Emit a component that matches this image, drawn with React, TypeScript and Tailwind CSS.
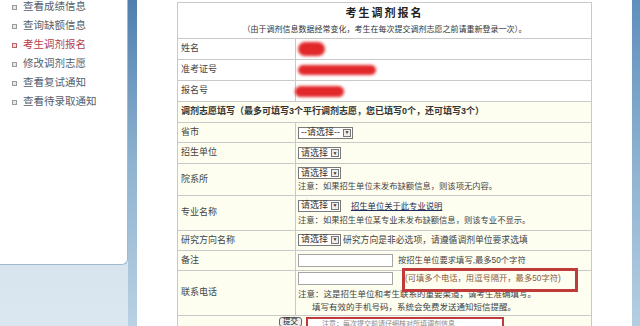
const menu = [
  { label: "查看成绩信息" },
  { label: "查询缺额信息" },
  { label: "考生调剂报名", active: true },
  { label: "修改调剂志愿" },
  { label: "查看复试通知" },
  { label: "查看待录取通知" },
];

function Select({ text }: { text: string }) {
  return (
    <span className="inline-flex h-[12px] shrink-0 items-center gap-[2px] self-start whitespace-nowrap border border-[#7a7a7a] bg-white pl-[2px] text-[9px] leading-none text-[#333]">
      <span>{text}</span>
      <span className="m-px flex h-[8px] w-[8px] items-center justify-center border border-[#777] bg-[#eee] text-[5px] text-[#333]">
        ▼
      </span>
    </span>
  );
}

function Scribble({ className }: { className: string }) {
  return <span className={`block rounded-full bg-[#e2272a] blur-[1.5px] ${className}`} />;
}

function Row({
  label,
  h,
  children,
  cream,
}: {
  label: string;
  h: string;
  children?: React.ReactNode;
  cream?: boolean;
}) {
  return (
    <div className={`flex border-b border-[#c9c9c9] ${h} ${cream ? "bg-[#fdfdf0]" : "bg-white"}`}>
      <div className="flex w-[118px] shrink-0 items-center border-r border-[#c9c9c9] pl-[3px] text-[9px] text-[#444]">
        {label}
      </div>
      <div className="relative flex min-w-0 flex-1 flex-col justify-center pl-[2px]">{children}</div>
    </div>
  );
}

export default function App() {
  return (
    <div className="flex h-[326px] w-[640px] overflow-hidden bg-white font-['Liberation_Sans','Noto_Sans_CJK_SC',sans-serif]">
      {/* sidebar */}
      <div className="flex w-[128px] shrink-0 flex-col bg-gradient-to-b from-[#c4d8e8] to-[#dbe7f0]">
        <div className="h-[265px] rounded-br-[6px] border-r border-b border-[#9fb9cf] bg-white">
          <ul className="flex flex-col gap-[4.5px]">
            {menu.map((m) => (
              <li key={m.label} className="flex h-[14.5px] items-center gap-[6px] pl-[12px]">
                <span
                  className={`h-[5px] w-[5px] border ${m.active ? "border-[#b9636b] bg-[#f3dcdc]" : "border-[#9a9a9a] bg-[#e8e8e8]"}`}
                />
                <span className={`text-[10.5px] ${m.active ? "text-[#b73a47]" : "text-[#55606c]"}`}>{m.label}</span>
              </li>
            ))}
          </ul>
        </div>
      </div>
      <div className="w-[9px] shrink-0 bg-gradient-to-b from-[#4f7fae] via-[#8fb3d0] to-[#b9d1e3]" />

      <div className="w-[40px] shrink-0" />

      {/* form table */}
      <div className="relative mt-[2px] w-[415px] shrink-0 self-start border-t border-l border-r border-[#c9c9c9] text-[#333]">
        <div className="flex h-[36px] flex-col items-center justify-center border-b border-[#c9c9c9] bg-white">
          <div className="text-[11px] font-bold tracking-[2px] text-[#222]">考生调剂报名</div>
          <div className="mt-[3px] text-[8px] text-[#333]">
            （由于调剂信息数据经常变化，考生在每次提交调剂志愿之前请重新登录一次）。
          </div>
        </div>
        <Row label="姓名" h="h-[21px]">
          <Scribble className="h-[14px] w-[27px]" />
        </Row>
        <Row label="准考证号" h="h-[21px]">
          <Scribble className="h-[10px] w-[78px]" />
        </Row>
        <Row label="报名号" h="h-[21px]">
          <Scribble className="-ml-[3px] h-[11px] w-[49px]" />
        </Row>
        <div className="flex h-[21px] items-center border-b border-[#c9c9c9] bg-[#fdfdf0] pl-[3px] text-[9px] font-bold text-[#333]">
          调剂志愿填写（最多可填写3个平行调剂志愿，您已填写0个，还可填写3个）
        </div>
        <Row label="省市" h="h-[20px]" cream>
          <Select text="--请选择--" />
        </Row>
        <Row label="招生单位" h="h-[21px]" cream>
          <Select text="请选择" />
        </Row>
        <Row label="院系所" h="h-[32px]" cream>
          <Select text="请选择" />
          <div className="mt-[2px] text-[8.3px] leading-[11px] text-[#444]">注意：如果招生单位未发布缺额信息，则该项无内容。</div>
        </Row>
        <Row label="专业名称" h="h-[35px]" cream>
          <div className="flex items-center gap-[10px]">
            <Select text="请选择" />
            <span className="text-[8.3px] text-[#1d2f5c] underline">招生单位关于此专业说明</span>
          </div>
          <div className="mt-[3px] text-[8.3px] leading-[11px] text-[#444]">
            注意：如果招生单位某专业未发布缺额信息，则该专业不显示。
          </div>
        </Row>
        <Row label="研究方向名称" h="h-[20px]" cream>
          <div className="flex items-center gap-[2px]">
            <Select text="请选择" />
            <span className="text-[8.8px] text-[#444]">研究方向是非必选项，请遵循调剂单位要求选填</span>
          </div>
        </Row>
        <Row label="备注" h="h-[20px]" cream>
          <div className="flex items-center gap-[5px]">
            <span className="h-[13px] w-[95px] border border-[#a5a5a5] bg-white" />
            <span className="text-[8.3px] text-[#444]">按招生单位要求填写,最多50个字符</span>
          </div>
        </Row>
        <Row label="联系电话" h="h-[45px]" cream>
          <div className="flex items-center gap-[12px]">
            <span className="h-[13px] w-[95px] border border-[#a5a5a5] bg-white" />
            <span className="text-[8.3px] text-[#8a5b3c]">(可填多个电话，用逗号隔开，最多50字符)</span>
          </div>
          <div className="mt-[3px] text-[8.5px] leading-[13px] text-[#444]">
            注意：这是招生单位和考生联系的重要渠道，请考生准确填写。
            <div className="pl-[14px]">填写有效的手机号码，系统会免费发送通知短信提醒。</div>
          </div>
          <span className="absolute left-[106px] top-[-3px] h-[24px] w-[176px] border-[3px] border-[#c0393b]" />
        </Row>
        <div className="flex h-[12px] items-start bg-[#fdfdf0] pl-[101px] pt-[1px]">
          <span className="rounded-[3px] border border-[#666] bg-[#eee] px-[3px] text-[7.5px] leading-[8px] text-[#222]">
            提交
          </span>
          <span className="ml-[4px] flex h-[12px] w-[198px] items-center border-[2px] border-b-0 border-[#c0393b] bg-white pl-[14px] text-[7px] leading-[8px] text-[#888]">
            注意：每次提交前请仔细核对所填调剂信息
          </span>
        </div>
      </div>

      <div className="flex-1" />
      <div className="w-[8px] shrink-0 bg-gradient-to-b from-[#5f8fbd] via-[#8db2d0] to-[#b5cee2]" />
    </div>
  );
}
